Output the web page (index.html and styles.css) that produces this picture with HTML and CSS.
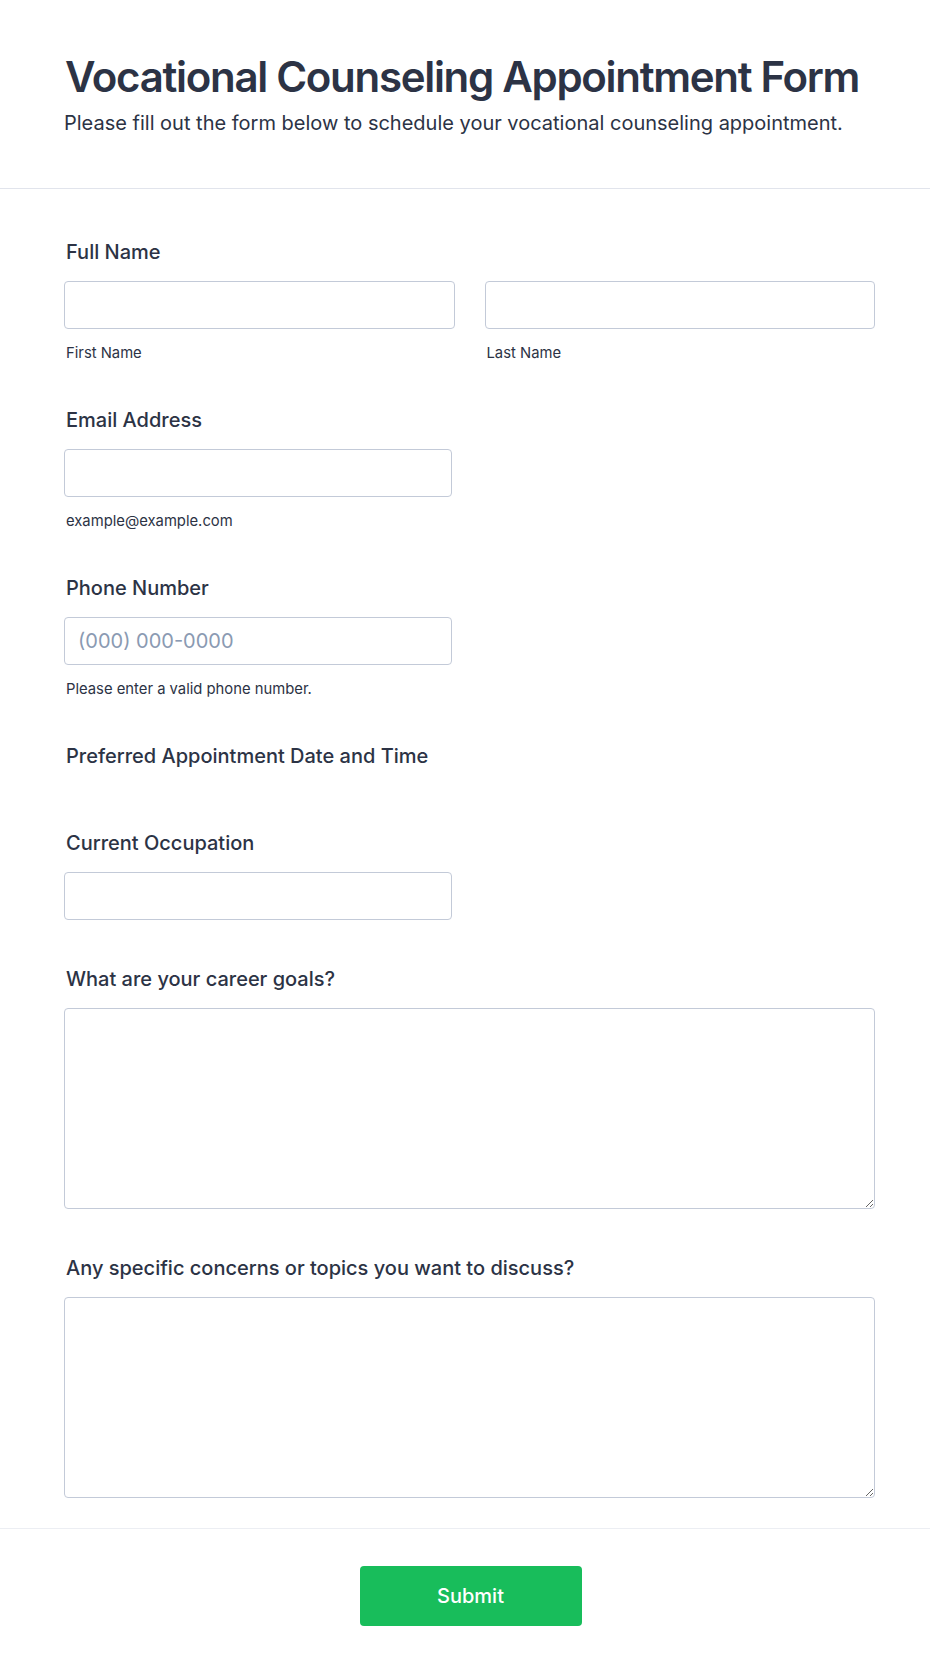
FILE: index.html
```html
<!DOCTYPE html>
<html lang="en">
<head>
<meta charset="utf-8">
<title>Vocational Counseling Appointment Form</title>
<link rel="stylesheet" href="styles.css">
</head>
<body>
<div class="page">
  <header class="header">
    <h1 class="title">Vocational Counseling Appointment Form</h1>
    <p class="subtitle">Please fill out the form below to schedule your vocational counseling appointment.</p>
  </header>
  <form class="form">
    <div class="field field-sub">
      <label class="label">Full Name</label>
      <div class="name-row">
        <div class="name-col">
          <input class="input" type="text">
          <span class="sublabel">First Name</span>
        </div>
        <div class="name-col">
          <input class="input" type="text">
          <span class="sublabel">Last Name</span>
        </div>
      </div>
    </div>
    <div class="field field-sub">
      <label class="label">Email Address</label>
      <input class="input half" type="email">
      <span class="sublabel">example@example.com</span>
    </div>
    <div class="field field-sub">
      <label class="label">Phone Number</label>
      <input class="input half" type="tel" placeholder="(000) 000-0000">
      <span class="sublabel">Please enter a valid phone number.</span>
    </div>
    <div class="field field-empty">
      <label class="label">Preferred Appointment Date and Time</label>
    </div>
    <div class="field">
      <label class="label">Current Occupation</label>
      <input class="input half" type="text">
    </div>
    <div class="field">
      <label class="label">What are your career goals?</label>
      <textarea class="textarea"></textarea>
    </div>
    <div class="field last">
      <label class="label">Any specific concerns or topics you want to discuss?</label>
      <textarea class="textarea"></textarea>
    </div>
  </form>
  <div class="footer">
    <button class="submit" type="button">Submit</button>
  </div>
</div>
</body>
</html>
```
FILE: styles.css
```css
* { box-sizing: border-box; }
html, body { margin: 0; padding: 0; background: #ffffff; }
body {
  font-family: Inter, "Noto Sans", "Liberation Sans", sans-serif;
  color: #2c3345;
}
.page { width: 930px; }

.header {
  padding: 52px 40px 53px 64px;
  border-bottom: 1px solid #e1e4ec;
}
.title {
  margin: 0;
  font-size: 42px;
  line-height: 50px;
  font-weight: 600;
  letter-spacing: -1.3px;
  white-space: nowrap;
  padding-left: 1px;
}
.subtitle {
  margin: 9px 0 0;
  font-size: 20px;
  line-height: 24px;
  font-weight: 400;
  white-space: nowrap;
}

.form {
  padding: 51px 55px 0 64px;
  display: flex;
  flex-direction: column;
}
.field {
  display: flex;
  flex-direction: column;
  align-items: flex-start;
  margin-bottom: 47px;
}
.field-sub { margin-bottom: 45px; }
.field-empty { margin-bottom: 63px; }
.field.last { margin-bottom: 30px; }
.label {
  font-size: 20px;
  line-height: 24px;
  font-weight: 500;
  margin-bottom: 17px;
  padding-left: 2px;
}
.field-empty .label { margin-bottom: 0; }
.name-row {
  display: grid;
  grid-template-columns: 1fr 1fr;
  column-gap: 30px;
  width: 100%;
}
.name-col { display: flex; flex-direction: column; align-items: flex-start; }
.input {
  display: block;
  width: 100%;
  height: 48px;
  border: 1px solid #c3cad8;
  border-radius: 4px;
  padding: 0 13px;
  font-family: inherit;
  font-size: 20px;
  color: #2c3345;
  background: #fff;
  outline: none;
}
.input.half { width: 388px; }
.input::placeholder { color: #8a9ab2; }
.sublabel {
  margin-top: 14px;
  font-size: 14.8px;
  line-height: 20px;
  padding-left: 2px;
}
.textarea {
  display: block;
  width: 100%;
  height: 201px;
  border: 1px solid #c3cad8;
  border-radius: 4px;
  padding: 10px 13px;
  font-family: inherit;
  font-size: 20px;
  color: #2c3345;
  background: #fff;
  outline: none;
}

.footer {
  border-top: 1px solid #eceef3;
  padding: 37px 53px 49px 64px;
  display: flex;
  justify-content: center;
}
.submit {
  width: 222px;
  height: 60px;
  border: none;
  border-radius: 4px;
  background: #18bd5b;
  color: #ffffff;
  font-family: inherit;
  font-size: 20px;
  font-weight: 500;
}
```
